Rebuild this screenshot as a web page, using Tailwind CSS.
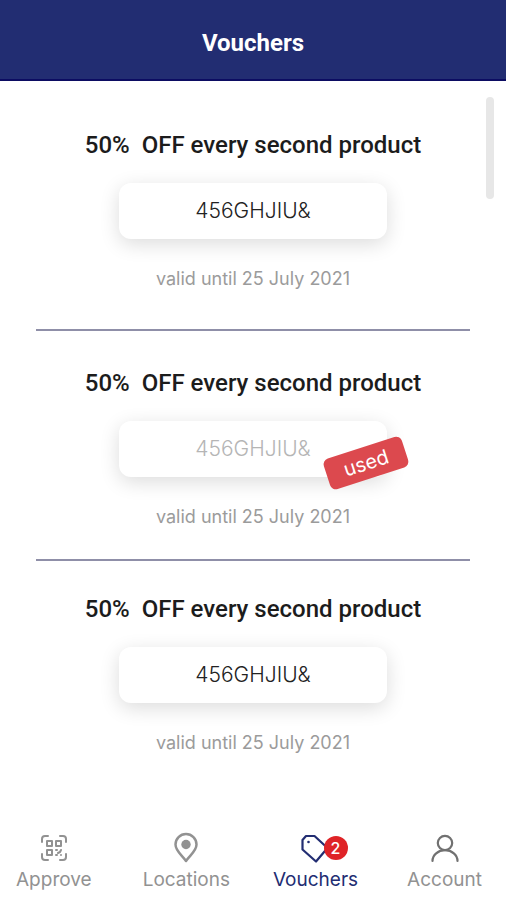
<!DOCTYPE html>
<html lang="en">
<head>
  <meta charset="UTF-8">
  <meta name="viewport" content="width=device-width, initial-scale=1.0">
  <title>Vouchers</title>
  <script src="https://cdn.jsdelivr.net/npm/@tailwindcss/browser@4"></script>
</head>
<body class="bg-white font-['Inter',sans-serif]">
  <div class="flex min-h-screen flex-col">
    <header class="border-b-2 border-[#0c0c62] bg-[#222d72] pt-[29px] pb-[22px] text-center">
      <h1 class="font-['Roboto',sans-serif] text-2xl leading-7 font-bold text-white">Vouchers</h1>
    </header>

    <main class="relative flex-1 px-9 text-center">
      <!-- Scroll indicator -->
      <div class="absolute top-4 right-3 h-[102px] w-2 rounded-full bg-[#e7e7e7]" aria-hidden="true"></div>

      <section class="border-b-2 border-[#8f8fa8] pt-[50px] pb-[38px]">
        <h2 class="font-['Roboto',sans-serif] text-2xl leading-7 font-medium text-[#1c1c1c]">50%&nbsp; OFF every second product</h2>
        <p class="mx-auto mt-6 w-[268px] rounded-xl bg-white py-3.5 text-[21px] leading-7 font-light text-[#222] shadow-[0_5px_20px_rgba(0,0,0,0.14)]">456GHJIU&amp;</p>
        <p class="mt-7 text-lg leading-6 text-[#9b9b9b]">valid until 25 July 2021</p>
      </section>

      <section class="border-b-2 border-[#8f8fa8] pt-[38px] pb-[30px]">
        <h2 class="font-['Roboto',sans-serif] text-2xl leading-7 font-medium text-[#1c1c1c]">50%&nbsp; OFF every second product</h2>
        <div class="relative mx-auto mt-6 w-[268px]">
          <p class="rounded-xl bg-white py-3.5 text-[21px] leading-7 font-light text-[#b5b5b5] shadow-[0_5px_20px_rgba(0,0,0,0.14)]">456GHJIU&amp;</p>
          <span class="absolute top-[26px] -right-5 w-[82px] -rotate-18 rounded-md bg-[#dc494e] text-xl leading-8 text-white">used</span>
        </div>
        <p class="mt-7 text-lg leading-6 text-[#9b9b9b]">valid until 25 July 2021</p>
      </section>

      <section class="pt-[34px] pb-8">
        <h2 class="font-['Roboto',sans-serif] text-2xl leading-7 font-medium text-[#1c1c1c]">50%&nbsp; OFF every second product</h2>
        <p class="mx-auto mt-6 w-[268px] rounded-xl bg-white py-3.5 text-[21px] leading-7 font-light text-[#222] shadow-[0_5px_20px_rgba(0,0,0,0.14)]">456GHJIU&amp;</p>
        <p class="mt-7 text-lg leading-6 text-[#9b9b9b]">valid until 25 July 2021</p>
      </section>
    </main>

    <nav class="flex justify-between pr-6 pb-2 pl-4 text-[19px] leading-6 text-[#929292]">
      <a href="#" class="mr-2 flex flex-col items-center gap-1">
        <svg class="h-8 w-8" viewBox="0 0 32 32" fill="none" stroke="currentColor" stroke-width="2" stroke-linecap="round" stroke-linejoin="round">
          <path d="M4 10V7q0-3 3-3h3M22 4h3q3 0 3 3v3M28 22v3q0 3-3 3h-3M10 28H7q-3 0-3-3v-3"/>
          <path d="M9 9h5v5H9zM18 9h5v5h-5zM9 18h5v5H9z"/>
          <path d="M18 18h1M23 18l-1 2-2 1M18 23h1M23 23v0"/>
        </svg>
        Approve
      </a>
      <a href="#" class="flex flex-col items-center gap-1">
        <svg class="h-8 w-8" viewBox="0 0 32 32">
          <path d="M16 29C12 23 5.500 19 5.500 12.500a10.500 10.500 0 0 1 21 0C26.500 19 20 23 16 29z" fill="none" stroke="currentColor" stroke-width="2.500" stroke-linejoin="round"/>
          <circle cx="16" cy="12.500" r="4.700" fill="currentColor"/>
        </svg>
        Locations
      </a>
      <a href="#" class="flex flex-col items-center gap-1 text-[#222d72]" aria-current="page">
        <span class="relative">
          <svg class="h-8 w-8" viewBox="0 0 32 32" fill="none" stroke="currentColor" stroke-width="2.200" stroke-linejoin="round">
            <path d="M6 4h8.500L27.500 16 16 29.500 2.500 17.500V8z"/>
            <circle cx="8.500" cy="10" r="1.300" fill="currentColor" stroke="none"/>
          </svg>
          <span class="absolute top-1 -right-4 h-6 w-6 rounded-full bg-[#df2327] text-center text-base leading-6 font-medium text-white">2</span>
        </span>
        Vouchers
      </a>
      <a href="#" class="ml-1.5 flex flex-col items-center gap-1">
        <svg class="h-8 w-8 text-[#717171]" viewBox="0 0 32 32" fill="none" stroke="currentColor" stroke-width="2.200" stroke-linecap="round">
          <circle cx="16" cy="11" r="7.200"/>
          <path d="M3.500 29a12.500 10.800 0 0 1 25 0"/>
        </svg>
        Account
      </a>
    </nav>
  </div>
</body>
</html>
